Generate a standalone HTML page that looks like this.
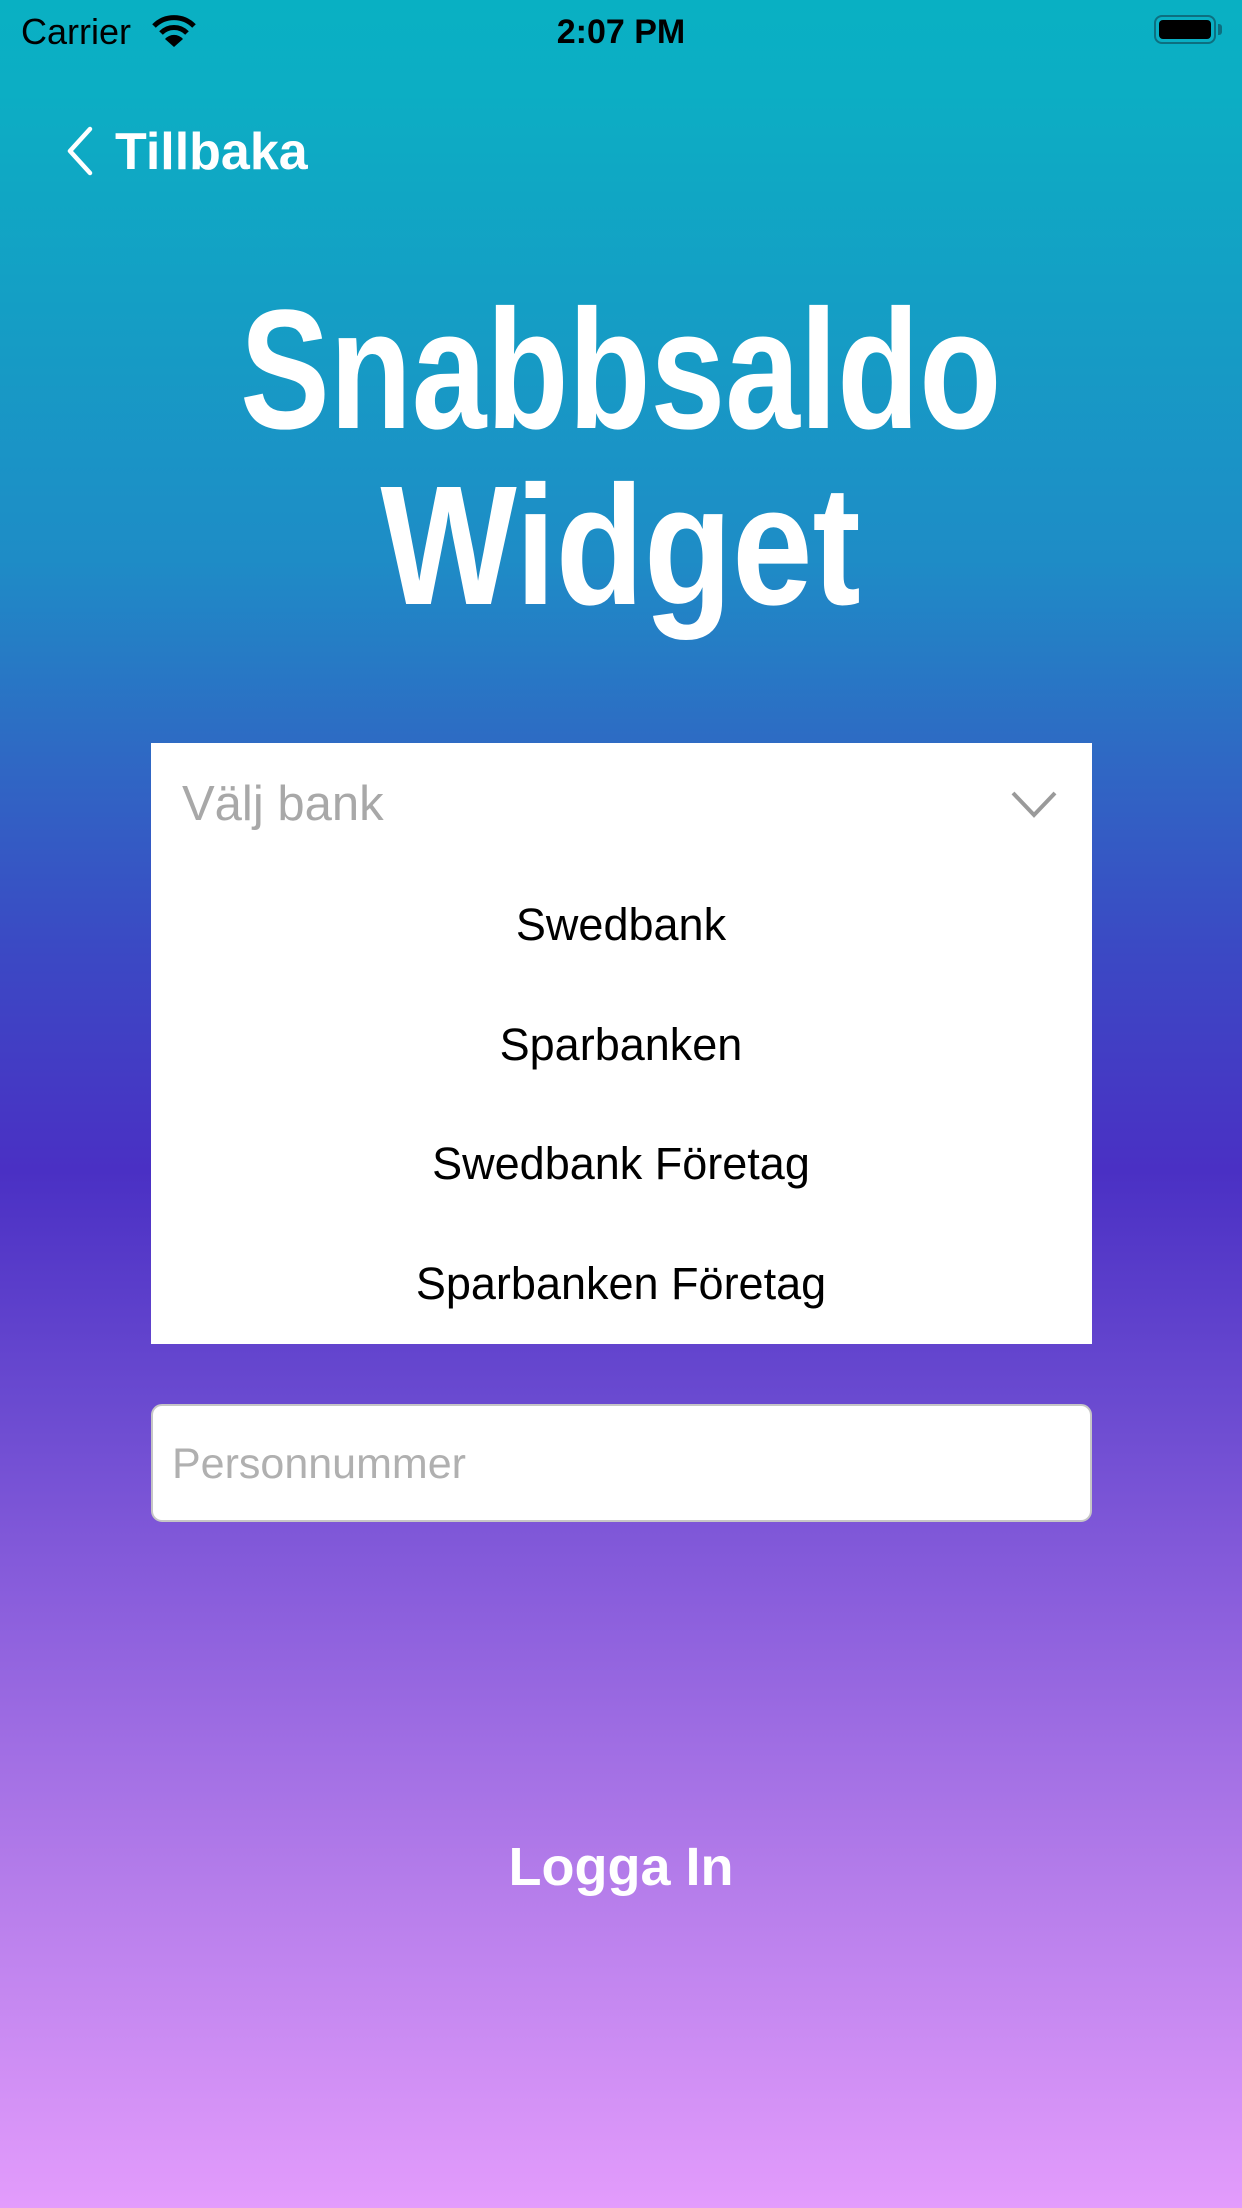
<!DOCTYPE html>
<html><head><meta charset="utf-8"><style>
html,body{margin:0;padding:0}
body{width:1242px;height:2208px;position:relative;overflow:hidden;font-family:"Liberation Sans",sans-serif;
background:linear-gradient(180deg,#09b0c3 0px,#0caec4 90px,#1e8cc6 560px,#2f68c4 760px,#3b49c4 950px,#4a30c4 1170px,#6a4ad0 1400px,#8a5edc 1600px,#b47cea 1880px,#e39cfc 2208px);}
.a{position:absolute;white-space:nowrap}
.t{color:#fff;font-weight:bold;font-size:170px;line-height:170px;left:0;width:1242px;text-align:center}
.t span{display:inline-block}
.it{position:absolute;left:0;width:940px;text-align:center;font-size:45px;color:#000;height:60px;line-height:60px}
</style></head><body>
<div class="a" style="left:21px;top:12px;font-size:36px;line-height:40px;color:#000">Carrier</div>
<svg class="a" style="left:151px;top:14px" width="46" height="34" viewBox="0 0 46 34"><path d="M3 12 A28 28 0 0 1 43 12" stroke="#000" stroke-width="5" fill="none"/><path d="M10 19 A18 18 0 0 1 36 19" stroke="#000" stroke-width="5" fill="none"/><path d="M23 33 L14 25 A12 12 0 0 1 32 25 Z" fill="#000"/></svg>
<div class="a" style="left:0;width:1242px;text-align:center;top:12px;font-size:34px;line-height:40px;font-weight:bold;color:#000">2:07 PM</div>
<div class="a" style="left:1154px;top:15px;width:62px;height:29px;border:2px solid #0d6f80;border-radius:8px;box-sizing:border-box"></div>
<div class="a" style="left:1159px;top:20px;width:52px;height:19px;background:#000;border-radius:4px"></div>
<div class="a" style="left:1218px;top:24px;width:4px;height:11px;background:#0d6f80;border-radius:0 3px 3px 0"></div>
<svg class="a" style="left:64px;top:126px" width="30" height="50" viewBox="0 0 30 50"><path d="M26 3 L6 25 L26 47" stroke="#fff" stroke-width="4.5" fill="none" stroke-linecap="round" stroke-linejoin="round"/></svg>
<div class="a" style="left:115px;top:127px;font-size:52px;line-height:50px;color:#fff;font-weight:bold">Tillbaka</div>
<div class="a t" style="top:285px"><span style="transform:scaleX(0.79)">Snabbsaldo</span></div>
<div class="a t" style="top:461px"><span style="transform:scaleX(0.85)">Widget</span></div>
<div class="a" style="left:151px;top:743px;width:941px;height:601px;background:#fff">
  <div class="a" style="left:31px;top:33px;font-size:49px;line-height:56px;color:#a8a8a8">Välj bank</div>
  <svg class="a" style="left:860px;top:48px" width="46" height="28" viewBox="0 0 46 28"><path d="M2 2 L23 24 L44 2" stroke="#9a9a9a" stroke-width="4" fill="none"/></svg>
  <div class="it" style="top:152px">Swedbank</div>
  <div class="it" style="top:272px">Sparbanken</div>
  <div class="it" style="top:391px">Swedbank Företag</div>
  <div class="it" style="top:511px">Sparbanken Företag</div>
</div>
<div class="a" style="left:151px;top:1404px;width:941px;height:118px;background:#fff;border:2px solid #c6c6c6;border-radius:11px;box-sizing:border-box">
  <div class="a" style="left:19px;top:33px;font-size:43px;line-height:50px;color:#b0b0b0">Personnummer</div>
</div>
<div class="a" style="left:0;width:1242px;text-align:center;top:1837px;font-size:54px;line-height:60px;font-weight:bold;color:#fff">Logga In</div>
</body></html>
